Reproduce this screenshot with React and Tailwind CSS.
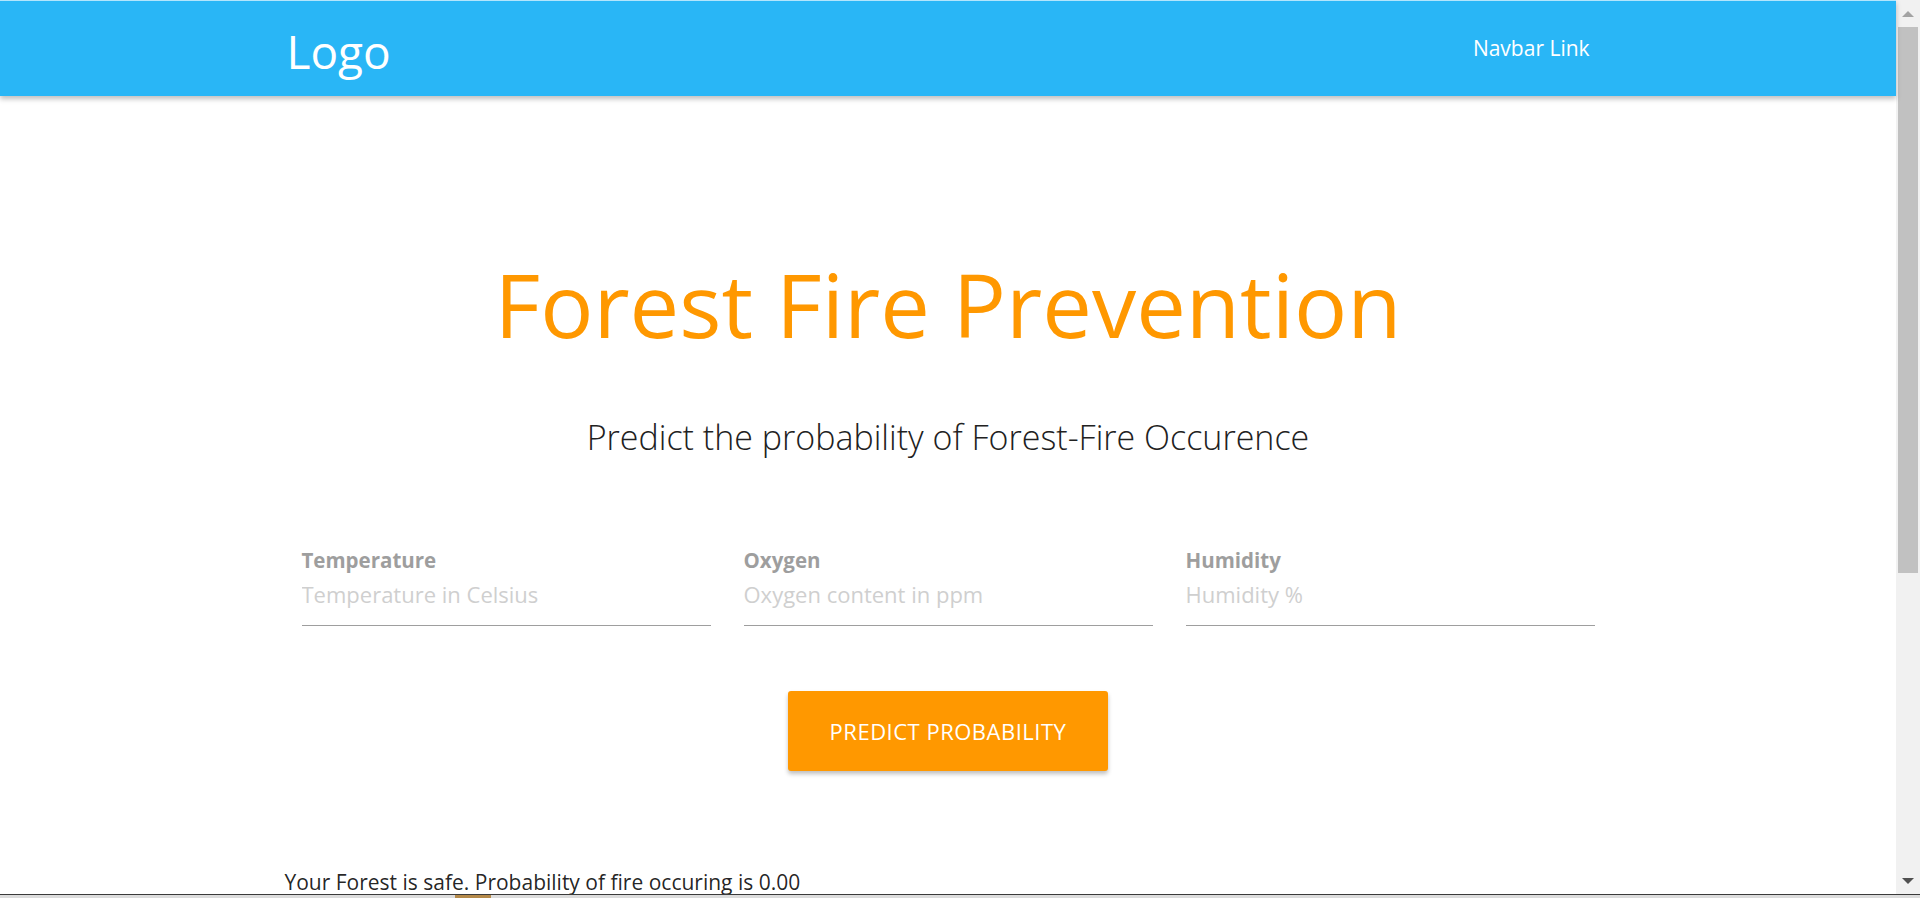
import { useState } from 'react';

const font = { fontFamily: '"Open Sans", "Noto Sans", sans-serif' };

function Field({ label, placeholder, value, onChange }) {
  return (
    <div className="flex flex-col">
      <label className="h-[24px] leading-[24px] text-[20.5px] font-bold text-[#9e9e9e]">{label}</label>
      <input
        value={value}
        onChange={(e) => onChange(e.target.value)}
        placeholder={placeholder}
        className="h-[54px] pb-[10px] text-[22px] text-[#212121] bg-transparent outline-none border-b border-[#9e9e9e] placeholder:text-[#cfcfcf]"
      />
    </div>
  );
}

function Scrollbar() {
  return (
    <div className="w-[24px] h-full flex flex-col bg-[#f1f1f1] shrink-0">
      <div className="h-[27px] flex items-center justify-center">
        <div className="w-0 h-0 border-l-[6px] border-r-[6px] border-b-[6px] border-l-transparent border-r-transparent border-b-[#a3a3a3]" />
      </div>
      <div className="h-[546px] mx-[2px] bg-[#c1c1c1]" />
      <div className="flex-1" />
      <div className="h-[27px] flex items-center justify-center">
        <div className="w-0 h-0 border-l-[6px] border-r-[6px] border-t-[6px] border-l-transparent border-r-transparent border-t-[#505050]" />
      </div>
    </div>
  );
}

export default function App() {
  const [temp, setTemp] = useState('');
  const [oxygen, setOxygen] = useState('');
  const [humidity, setHumidity] = useState('');

  return (
    <div className="w-[1920px] h-[898px] flex flex-col overflow-hidden bg-white" style={font}>
      <div className="flex flex-1 min-h-0">
        <div className="flex-1 flex flex-col min-w-0">
          <nav className="h-[96px] bg-[#29b6f6] border-t border-[#b3e5fc] shadow-[0_3px_5px_rgba(0,0,0,0.25)] relative z-10">
            <div className="w-[70%] mx-auto h-full flex items-center justify-between">
              <a className="text-[46px] text-white leading-none pl-[2px] pt-[4px]">Logo</a>
              <a className="text-[21px] text-white px-[22px]">Navbar Link</a>
            </div>
          </nav>

          <main className="flex flex-col">
            <h1 className="mt-[160px] h-[96px] leading-[96px] text-center text-[88.5px] text-[#ff9800]">Forest Fire Prevention</h1>
            <h5 className="mt-[61px] h-[48px] leading-[48px] text-center text-[34px] font-light text-[#212121]">Predict the probability of Forest-Fire Occurence</h5>

            <div className="mt-[87px] w-[1293px] mx-auto grid grid-cols-3 gap-x-[33px]">
              <Field label="Temperature" placeholder="Temperature in Celsius" value={temp} onChange={setTemp} />
              <Field label="Oxygen" placeholder="Oxygen content in ppm" value={oxygen} onChange={setOxygen} />
              <Field label="Humidity" placeholder="Humidity %" value={humidity} onChange={setHumidity} />
            </div>

            <div className="mt-[65px] flex justify-center">
              <button className="w-[320px] h-[80px] rounded-[3px] bg-[#ff9800] text-white text-[22px] tracking-[0.5px] uppercase shadow-[0_3px_4px_rgba(0,0,0,0.25)]">
                Predict Probability
              </button>
            </div>

            <div className="w-[70%] mx-auto mt-[99px]">
              <p className="h-[24px] leading-[24px] text-[21px] text-[rgba(0,0,0,0.87)]">Your Forest is safe. Probability of fire occuring is 0.00</p>
            </div>
          </main>
        </div>
        <Scrollbar />
      </div>
      <div className="h-[4px] shrink-0 border-t border-[#3a3a3a] bg-[#dcdcdc] flex">
        <div className="ml-[455px] w-[36px] bg-[#b58a4a]" />
      </div>
    </div>
  );
}
